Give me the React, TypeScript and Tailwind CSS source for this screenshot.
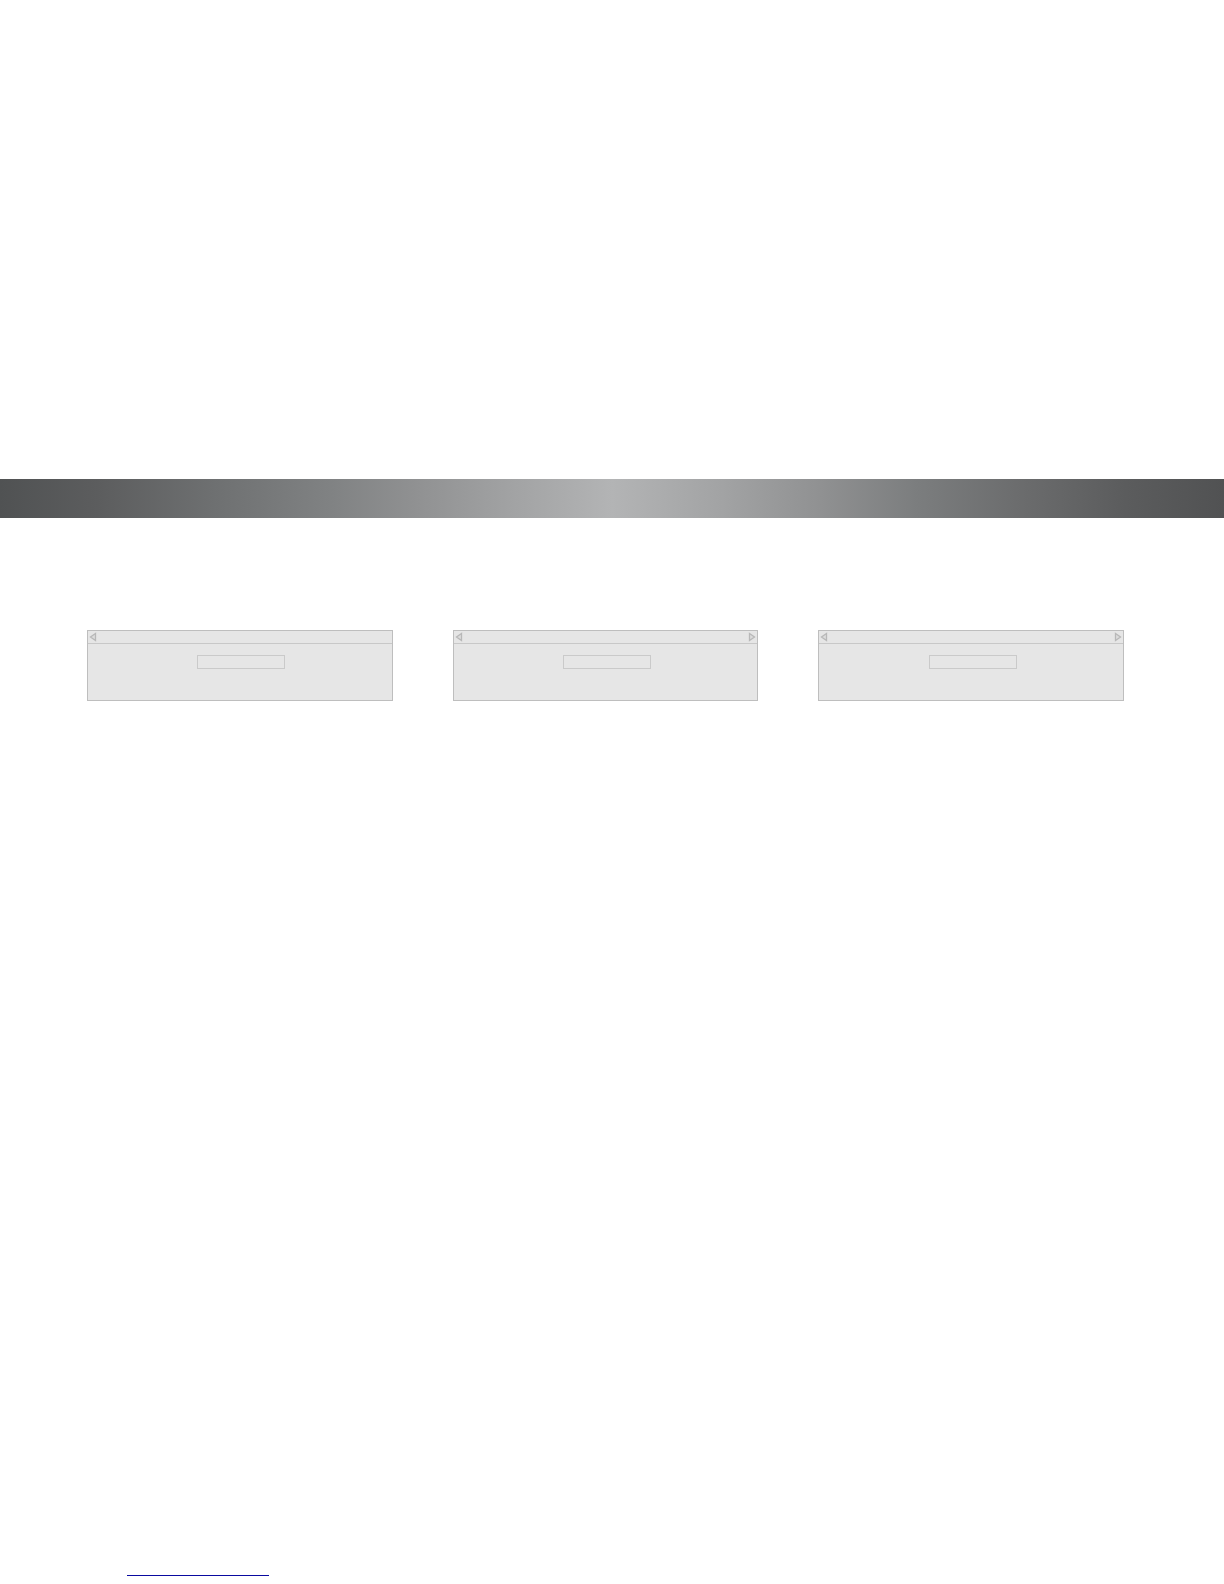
import { useState } from "react";

interface Panel {
    id: string;
    hasNext: boolean;
}

const panels: Panel[] = [
    { id: "first", hasNext: false },
    { id: "second", hasNext: true },
    { id: "third", hasNext: true },
];

function Arrow({ direction }: { direction: "left" | "right" }) {
    return (
        <svg width="8" height="10" viewBox="0 0 8 10" fill="#dcdcdc" stroke="#b8b8b8" strokeWidth="1.3">
            {direction === "left" ? <path d="M6.5 1.5v7L1.5 5z" /> : <path d="M1.5 1.5v7L6.5 5z" />}
        </svg>
    );
}

function PanelCard({ panel }: { panel: Panel }) {
    const [value, setValue] = useState("");

    return (
        <section className="flex-1 min-w-0 bg-[#e6e6e6] border border-[#bebebe]">
            {/* Pager bar */}
            <div className="flex h-[13px] items-center justify-between border-b border-[#c8c8c8] px-px">
                <button aria-label="Previous">
                    <Arrow direction="left" />
                </button>
                {panel.hasNext && (
                    <button aria-label="Next">
                        <Arrow direction="right" />
                    </button>
                )}
            </div>
            <div className="flex justify-center pt-[11px] pb-[31px] pl-[3px]">
                <input
                    id={panel.id}
                    aria-label="Value"
                    value={value}
                    onChange={(e) => setValue(e.target.value)}
                    className="block h-[14px] w-[88px] border border-[#cacaca] bg-transparent px-1 text-[10px] outline-none"
                />
            </div>
        </section>
    );
}

export default function App() {
    return (
        <div className="flex min-h-screen flex-col bg-white font-['Liberation_Sans',sans-serif]">
            {/* Banner */}
            <header className="pt-[479px]">
                <div className="h-[39px] bg-[linear-gradient(to_right,#505253_0%,#5c5d5e_8%,#6f7172_18%,#808283_27%,#909192_34%,#a2a3a4_42%,#b3b4b5_50%,#a2a3a4_59%,#909192_67%,#7b7d7e_75%,#6a6b6c_84%,#5b5c5d_92%,#515253_100%)]" />
            </header>

            <main className="flex items-start gap-[60px] pt-28 pr-[100px] pl-[87px]">
                {panels.map((panel) => (
                    <PanelCard key={panel.id} panel={panel} />
                ))}
            </main>

            <footer className="mt-auto pb-2 pl-[127px]">
                <a href="#" aria-label="Link" className="block h-4 w-[142px] border-b border-[#0a0aa0]" />
            </footer>
        </div>
    );
}
